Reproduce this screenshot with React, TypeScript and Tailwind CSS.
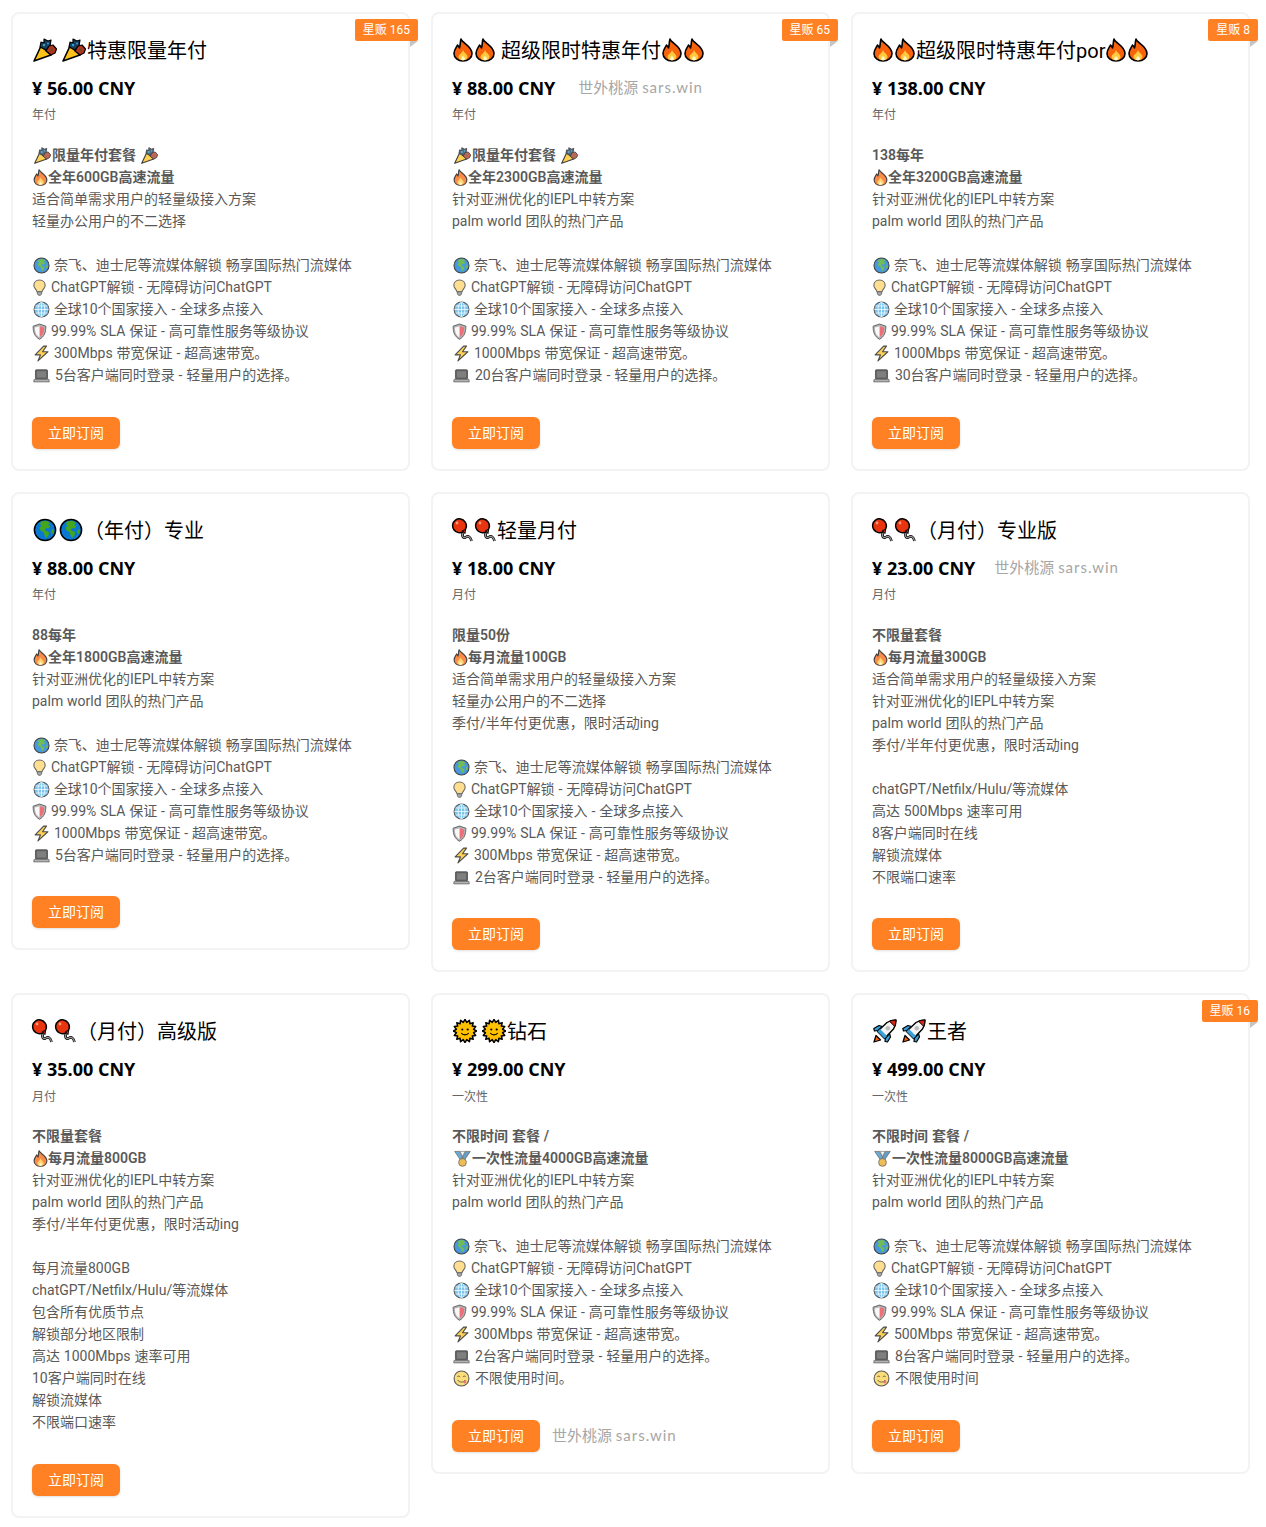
import React from "react";

type EmojiName =
  | "popper"
  | "fire"
  | "earth"
  | "bulb"
  | "web"
  | "shield"
  | "zap"
  | "laptop"
  | "balloon"
  | "sun"
  | "rocket"
  | "medal"
  | "yum";

const Art = ({ name }: { name: EmojiName }) => {
  switch (name) {
    case "popper":
      return (
        <>
          <path d="M1 23 L8 8 L18 17 Z" fill="#fcc21b" stroke="#000" strokeWidth="1.6" strokeLinejoin="round" />
          <path d="M7 9 L8 4 L11 5 L11 1 L15 3 L18 2 L17 8 L13 12 Z" fill="#16405c" stroke="#000" strokeWidth="1.2" strokeLinejoin="round" />
          <path d="M13 13 L16 8 L20 7 L23.5 11 L22 15 L18 17 Z" fill="#b3341c" stroke="#000" strokeWidth="1.2" strokeLinejoin="round" />
          <circle cx="11" cy="7" r="1.2" fill="#3aa0d8" />
          <circle cx="15" cy="5.5" r="1" fill="#3aa0d8" />
          <circle cx="18.5" cy="12" r="1.4" fill="#6b4a2a" />
        </>
      );
    case "fire":
      return (
        <>
          <path d="M10 1 C11 5 21 8 21 15.5 C21 20 17 23 12 23 C7 23 3 20 3 15.5 C3 11.5 5.5 9.5 6.5 7 C7.5 8 8 9 8.5 10 C9.5 7 9 4 10 1 Z" fill="#f7630c" stroke="#000" strokeWidth="1.6" strokeLinejoin="round" />
          <path d="M12 12 C13 15 16.5 16 16.5 19 C16.5 21 14.2 22.3 12 22.3 C9.8 22.3 7.5 21 7.5 19 C7.5 16.5 11 15.5 12 12 Z" fill="#ffc83d" />
          <path d="M12 17.5 C12.6 19 14 19.5 14 20.7 C14 21.7 13 22.3 12 22.3 C11 22.3 10 21.7 10 20.7 C10 19.5 11.4 19 12 17.5 Z" fill="#fff4c4" />
        </>
      );
    case "earth":
      return (
        <>
          <circle cx="12" cy="12" r="10.6" fill="#0a78d2" stroke="#000" strokeWidth="1.5" />
          <path d="M8 3.5 L14 2.8 L17 5 L15 7 L17.5 8 L15.5 10.5 L13.5 10 L11.5 11.5 L13.5 13 L16 14 L15.5 17.5 L13 20 L11.5 17 L10.5 14 L7.5 12.5 L6.5 9.5 L8.5 8 L7 6 Z" fill="#43a61c" />
          <path d="M18.5 12 L21 11 L20.5 15 L18.5 16 Z" fill="#43a61c" />
        </>
      );
    case "bulb":
      return (
        <>
          <path d="M12 1.5 C6.5 1.5 4 5.5 4 9 C4 12.5 7.5 14.5 8.5 18 L15.5 18 C16.5 14.5 20 12.5 20 9 C20 5.5 17.5 1.5 12 1.5 Z" fill="#ffd56a" stroke="#333" strokeWidth="1.5" />
          <path d="M9 18 L15 18 L15 21 L13.5 23 L10.5 23 L9 21 Z" fill="#8a8a8a" stroke="#333" strokeWidth="1.2" strokeLinejoin="round" />
        </>
      );
    case "web":
      return (
        <>
          <circle cx="12" cy="12" r="10.5" fill="#4fb2e8" stroke="#222" strokeWidth="1.5" />
          <ellipse cx="12" cy="12" rx="4.8" ry="10.2" fill="none" stroke="#e8f6ff" strokeWidth="1.2" />
          <path d="M12 2 L12 22 M2 12 L22 12 M3.5 7 L20.5 7 M3.5 17 L20.5 17" stroke="#e8f6ff" strokeWidth="1.2" />
        </>
      );
    case "shield":
      return (
        <>
          <path d="M12 1.5 L21 4.5 C21 13 19 19 12 23 C5 19 3 13 3 4.5 Z" fill="#9a9a9a" stroke="#333" strokeWidth="1.4" strokeLinejoin="round" />
          <path d="M12 4.5 L18.5 6.5 C18.5 13 17 17.5 12 20.5 Z" fill="#e8404a" />
          <path d="M12 4.5 L5.5 6.5 C5.5 13 7 17.5 12 20.5 Z" fill="#f6f6f6" />
        </>
      );
    case "zap":
      return <path d="M15 1.5 L3 14 L10.5 14 L7 22.5 L21 9.5 L13.5 9.5 L19 1.5 Z" fill="#fcc21b" stroke="#111" strokeWidth="1.6" strokeLinejoin="round" />;
    case "laptop":
      return (
        <>
          <rect x="3.5" y="4" width="17" height="13" rx="1" fill="#2b2b2b" stroke="#222" strokeWidth="1.3" />
          <rect x="5.5" y="6" width="13" height="9" fill="#555" />
          <path d="M1.5 17.5 L22.5 17.5 L23 21 L1 21 Z" fill="#999" stroke="#333" strokeWidth="1.1" strokeLinejoin="round" />
        </>
      );
    case "balloon":
      return (
        <>
          <path d="M12.5 14 C10 18 12.5 21 15 19 C17 17.5 19.5 18.5 20.5 23" fill="none" stroke="#000" strokeWidth="2.6" />
          <path d="M12.5 14 C10 18 12.5 21 15 19 C17 17.5 19.5 18.5 20.5 23" fill="none" stroke="#999" strokeWidth="1.2" />
          <ellipse cx="8.5" cy="7.8" rx="6.8" ry="7" fill="#e8340f" stroke="#000" strokeWidth="1.5" transform="rotate(-35 8.5 7.8)" />
          <path d="M11.5 12.5 L14 15.5 L14.5 11.5 Z" fill="#e8340f" stroke="#000" strokeWidth="1" strokeLinejoin="round" />
          <circle cx="6" cy="5" r="1.4" fill="#ff9a7a" />
        </>
      );
    case "sun": {
      const rays = Array.from({ length: 16 }, (_, i) => {
        const a = (i / 16) * Math.PI * 2;
        const b = ((i + 0.5) / 16) * Math.PI * 2;
        return `${12 + 11.6 * Math.cos(a)},${12 + 11.6 * Math.sin(a)} ${12 + 8.8 * Math.cos(b)},${12 + 8.8 * Math.sin(b)}`;
      }).join(" ");
      return (
        <>
          <polygon points={rays} fill="#ffc000" stroke="#000" strokeWidth="1.5" strokeLinejoin="round" />
          <circle cx="9.3" cy="10.5" r="1.1" fill="#000" />
          <circle cx="14.7" cy="10.5" r="1.1" fill="#000" />
          <path d="M8.3 14 C10 16.4 14 16.4 15.7 14" fill="none" stroke="#000" strokeWidth="1.2" />
        </>
      );
    }
    case "rocket":
      return (
        <>
          <path d="M1 23 L3 16.5 L7.5 21 Z" fill="#f7630c" stroke="#000" strokeWidth="1.3" strokeLinejoin="round" />
          <path d="M5 11.5 L1.5 12 L0.8 9.5 L6 6.5 L9.5 7.5 Z M12.5 19 L12 22.5 L14.5 23 L17.5 18 L16.5 14.5 Z" fill="#3aa0d8" stroke="#000" strokeWidth="1.2" strokeLinejoin="round" />
          <path d="M4.5 12.5 L14 3.5 C17 1.5 20 1 23 1 C23 4 22.5 7 20.5 10 L11.5 19.5 Z" fill="#f4f4f4" stroke="#000" strokeWidth="1.4" strokeLinejoin="round" />
          <path d="M4.5 12.5 L7 10 L14 17 L11.5 19.5 Z" fill="#3aa0d8" />
          <path d="M16.5 2.2 C18.5 1.4 21 1 23 1 C23 3 22.5 5.5 21.8 7.5 Z" fill="#d9260f" stroke="#000" strokeWidth="1" strokeLinejoin="round" />
          <circle cx="14.8" cy="9.2" r="2.3" fill="#bdbdbd" />
        </>
      );
    case "medal":
      return (
        <>
          <path d="M1 2 L8 2 L13.5 13 L10 15.5 Z" fill="#3a8fc7" stroke="#333" strokeWidth="1" strokeLinejoin="round" />
          <path d="M23 2 L16 2 L10.5 13 L14 15.5 Z" fill="#2f7fb8" stroke="#333" strokeWidth="1" strokeLinejoin="round" />
          <path d="M8.5 2 L15.5 2 L12 9 Z" fill="#f2f2f2" stroke="#333" strokeWidth="0.8" />
          <circle cx="12" cy="17.5" r="5.5" fill="#e8a820" stroke="#333" strokeWidth="1.1" />
        </>
      );
    case "yum":
      return (
        <>
          <circle cx="12" cy="12" r="10.5" fill="#fcd34d" stroke="#222" strokeWidth="1.5" />
          <path d="M6 10 C7 8 9 8 10 10 M14 10 C15 8 17 8 18 10" fill="none" stroke="#222" strokeWidth="1.3" />
          <path d="M6.5 14 C9 18 15 18 17.5 14" fill="none" stroke="#222" strokeWidth="1.3" />
          <path d="M14 16 L18.5 14.5 C19.5 17 18 19.5 16 19 C14.8 18.7 14.2 17.5 14 16 Z" fill="#e8404a" />
        </>
      );
  }
};

// advance widths follow the reference, each emoji has its own
const smallWidth: Record<EmojiName, string> = {
  popper: "w-[20px]",
  fire: "w-[16px]",
  earth: "w-[18px]",
  bulb: "w-[15px]",
  web: "w-[18px]",
  shield: "w-[15px]",
  zap: "w-[18px]",
  laptop: "w-[19px]",
  balloon: "w-[18px]",
  sun: "w-[18px]",
  rocket: "w-[18px]",
  medal: "w-[20px]",
  yum: "w-[19px]",
};

const titleWidth: Record<EmojiName, string> = {
  popper: "w-[25px]",
  fire: "w-[22px]",
  earth: "w-[26px]",
  bulb: "w-[22px]",
  web: "w-[26px]",
  shield: "w-[22px]",
  zap: "w-[22px]",
  laptop: "w-[26px]",
  balloon: "w-[22.5px]",
  sun: "w-[25px]",
  rocket: "w-[25px]",
  medal: "w-[26px]",
  yum: "w-[26px]",
};

const Emoji = ({ name, big }: { name: EmojiName; big?: boolean }) => (
  <span
    className={
      big
        ? `inline-flex justify-center align-[-4px] ${titleWidth[name]}`
        : `inline-flex justify-center align-[-4px] opacity-75 ${smallWidth[name]}`
    }
  >
    <svg viewBox="0 0 24 24" className={big ? "w-[24px] h-[24px] shrink-0" : "w-[17px] h-[17px] shrink-0"}>
      <Art name={name} />
    </svg>
  </span>
);

type Line = { text: string; icon?: EmojiName; spaced?: boolean; bold?: boolean; tail?: EmojiName };

const Watermark = () => (
  <span className="text-[15px] text-[#a6a6a6] font-['Lato','Noto_Sans_CJK_SC',sans-serif]">
    世外桃源 <span className="tracking-[1px]">sars.win</span>
  </span>
);

const features = (mbps: string, clients: string, forever?: string): Line[] => {
  const rows: Line[] = [
    { icon: "earth", spaced: true, text: "奈飞、迪士尼等流媒体解锁 畅享国际热门流媒体" },
    { icon: "bulb", spaced: true, text: "ChatGPT解锁 - 无障碍访问ChatGPT" },
    { icon: "web", spaced: true, text: "全球10个国家接入 - 全球多点接入" },
    { icon: "shield", spaced: true, text: "99.99% SLA 保证 - 高可靠性服务等级协议" },
    { icon: "zap", spaced: true, text: `${mbps}Mbps 带宽保证 - 超高速带宽。` },
    { icon: "laptop", spaced: true, text: `${clients}台客户端同时登录 - 轻量用户的选择。` },
  ];
  if (forever) rows.push({ icon: "yum", spaced: true, text: forever });
  return rows;
};

const plain = (...rows: string[]): Line[] => rows.map((text) => ({ text }));
const blank: Line = { text: "" };
const IEPL = plain("针对亚洲优化的IEPL中转方案", "palm world 团队的热门产品");
const LIGHT = "适合简单需求用户的轻量级接入方案";

type Plan = {
  icons: EmojiName[];
  gap?: boolean;
  title: string;
  tailIcons?: EmojiName[];
  price: string;
  cycle: string;
  badge?: string;
  priceMark?: string;
  buttonMark?: boolean;
  lines: Line[];
};

const plans: Plan[] = [
  {
    icons: ["popper", "popper"],
    gap: true,
    title: "特惠限量年付",
    price: "¥ 56.00 CNY",
    cycle: "年付",
    badge: "星贩 165",
    lines: [
      { icon: "popper", text: "限量年付套餐 ", tail: "popper", bold: true },
      { icon: "fire", text: "全年600GB高速流量", bold: true },
      ...plain(LIGHT, "轻量办公用户的不二选择"),
      blank,
      ...features("300", "5"),
    ],
  },
  {
    icons: ["fire", "fire"],
    title: " 超级限时特惠年付",
    tailIcons: ["fire", "fire"],
    price: "¥ 88.00 CNY",
    cycle: "年付",
    badge: "星贩 65",
    priceMark: "ml-[23px]",
    lines: [
      { icon: "popper", text: "限量年付套餐 ", tail: "popper", bold: true },
      { icon: "fire", text: "全年2300GB高速流量", bold: true },
      ...IEPL,
      blank,
      ...features("1000", "20"),
    ],
  },
  {
    icons: ["fire", "fire"],
    title: "超级限时特惠年付por",
    tailIcons: ["fire", "fire"],
    price: "¥ 138.00 CNY",
    cycle: "年付",
    badge: "星贩 8",
    lines: [
      { text: "138每年", bold: true },
      { icon: "fire", text: "全年3200GB高速流量", bold: true },
      ...IEPL,
      blank,
      ...features("1000", "30"),
    ],
  },
  {
    icons: ["earth", "earth"],
    title: "（年付）专业",
    price: "¥ 88.00 CNY",
    cycle: "年付",
    lines: [
      { text: "88每年", bold: true },
      { icon: "fire", text: "全年1800GB高速流量", bold: true },
      ...IEPL,
      blank,
      ...features("1000", "5"),
    ],
  },
  {
    icons: ["balloon", "balloon"],
    title: "轻量月付",
    price: "¥ 18.00 CNY",
    cycle: "月付",
    lines: [
      { text: "限量50份", bold: true },
      { icon: "fire", text: "每月流量100GB", bold: true },
      ...plain(LIGHT, "轻量办公用户的不二选择", "季付/半年付更优惠，限时活动ing"),
      blank,
      ...features("300", "2"),
    ],
  },
  {
    icons: ["balloon", "balloon"],
    title: "（月付）专业版",
    price: "¥ 23.00 CNY",
    cycle: "月付",
    priceMark: "ml-[19px]",
    lines: [
      { text: "不限量套餐", bold: true },
      { icon: "fire", text: "每月流量300GB", bold: true },
      ...plain(LIGHT, ...IEPL.map((l) => l.text), "季付/半年付更优惠，限时活动ing"),
      blank,
      ...plain("chatGPT/Netfilx/Hulu/等流媒体", "高达 500Mbps 速率可用", "8客户端同时在线", "解锁流媒体", "不限端口速率"),
    ],
  },
  {
    icons: ["balloon", "balloon"],
    title: "（月付）高级版",
    price: "¥ 35.00 CNY",
    cycle: "月付",
    lines: [
      { text: "不限量套餐", bold: true },
      { icon: "fire", text: "每月流量800GB", bold: true },
      ...IEPL,
      ...plain("季付/半年付更优惠，限时活动ing"),
      blank,
      ...plain(
        "每月流量800GB",
        "chatGPT/Netfilx/Hulu/等流媒体",
        "包含所有优质节点",
        "解锁部分地区限制",
        "高达 1000Mbps 速率可用",
        "10客户端同时在线",
        "解锁流媒体",
        "不限端口速率",
      ),
    ],
  },
  {
    icons: ["sun", "sun"],
    gap: true,
    title: "钻石",
    price: "¥ 299.00 CNY",
    cycle: "一次性",
    buttonMark: true,
    lines: [
      { text: "不限时间 套餐 /", bold: true },
      { icon: "medal", text: "一次性流量4000GB高速流量", bold: true },
      ...IEPL,
      blank,
      ...features("300", "2", "不限使用时间。"),
    ],
  },
  {
    icons: ["rocket", "rocket"],
    gap: true,
    title: "王者",
    price: "¥ 499.00 CNY",
    cycle: "一次性",
    badge: "星贩 16",
    lines: [
      { text: "不限时间 套餐 /", bold: true },
      { icon: "medal", text: "一次性流量8000GB高速流量", bold: true },
      ...IEPL,
      blank,
      ...features("500", "8", "不限使用时间"),
    ],
  },
];

const Badge = ({ label }: { label: string }) => (
  <div className="absolute top-[5px] -right-[10px]">
    <div className="h-[22px] leading-[22px] px-2 text-xs text-white bg-[#ff8124] rounded-[2px]">{label}</div>
    <div className="absolute right-0 top-[22px] w-0 h-0 border-t-[6px] border-r-[8px] border-t-[#c4c4c4] border-r-transparent" />
  </div>
);

const Card = ({ plan }: { plan: Plan }) => (
  <div className="relative bg-white border-2 border-[#f3f3f3] rounded-lg px-[19px] pt-[23px] pb-[19.8px]">
    {plan.badge && <Badge label={plan.badge} />}
    <h3 className="text-xl leading-7 text-black whitespace-pre">
      {plan.icons.map((n, i) => (
        <React.Fragment key={i}>
          <Emoji name={n} big />
          {plan.gap && i === 0 ? " " : ""}
        </React.Fragment>
      ))}
      {plan.title}
      {plan.tailIcons?.map((n, i) => <Emoji key={i} name={n} big />)}
    </h3>
    <div className="mt-[9.3px] flex items-center h-7">
      <span className="text-lg font-bold leading-7 text-black font-['Open_Sans','Noto_Sans_CJK_SC',sans-serif]">{plan.price}</span>
      {plan.priceMark && (
        <span className={plan.priceMark}>
          <Watermark />
        </span>
      )}
    </div>
    <div className="mt-[3.1px] text-xs leading-5 text-[#666]">{plan.cycle}</div>
    <div className="mt-[18.6px] text-sm leading-[22px] text-[#595959] [word-spacing:0.4px]">
      {plan.lines.map((line, i) => (
        <div key={i} className={line.bold ? "h-[22px] font-semibold whitespace-pre" : "h-[22px] whitespace-pre"}>
          {line.icon && <Emoji name={line.icon} />}
          {line.spaced ? " " : ""}
          {line.text}
          {line.tail && <Emoji name={line.tail} />}
        </div>
      ))}
    </div>
    <div className="mt-[30.8px] flex items-center">
      <button className="h-8 w-[88px] rounded-md bg-[#ff8124] text-sm text-white shadow-sm">立即订阅</button>
      {plan.buttonMark && (
        <span className="ml-3">
          <Watermark />
        </span>
      )}
    </div>
  </div>
);

export default function App() {
  return (
    <div className="min-h-[1527px] bg-white pt-3 pl-[11px] pr-[16px] font-['Roboto','Noto_Sans_CJK_SC',sans-serif]">
      <div className="grid grid-cols-3 gap-x-[21px] gap-y-[21px] items-start">
        {plans.map((plan, i) => (
          <Card key={i} plan={plan} />
        ))}
      </div>
    </div>
  );
}
